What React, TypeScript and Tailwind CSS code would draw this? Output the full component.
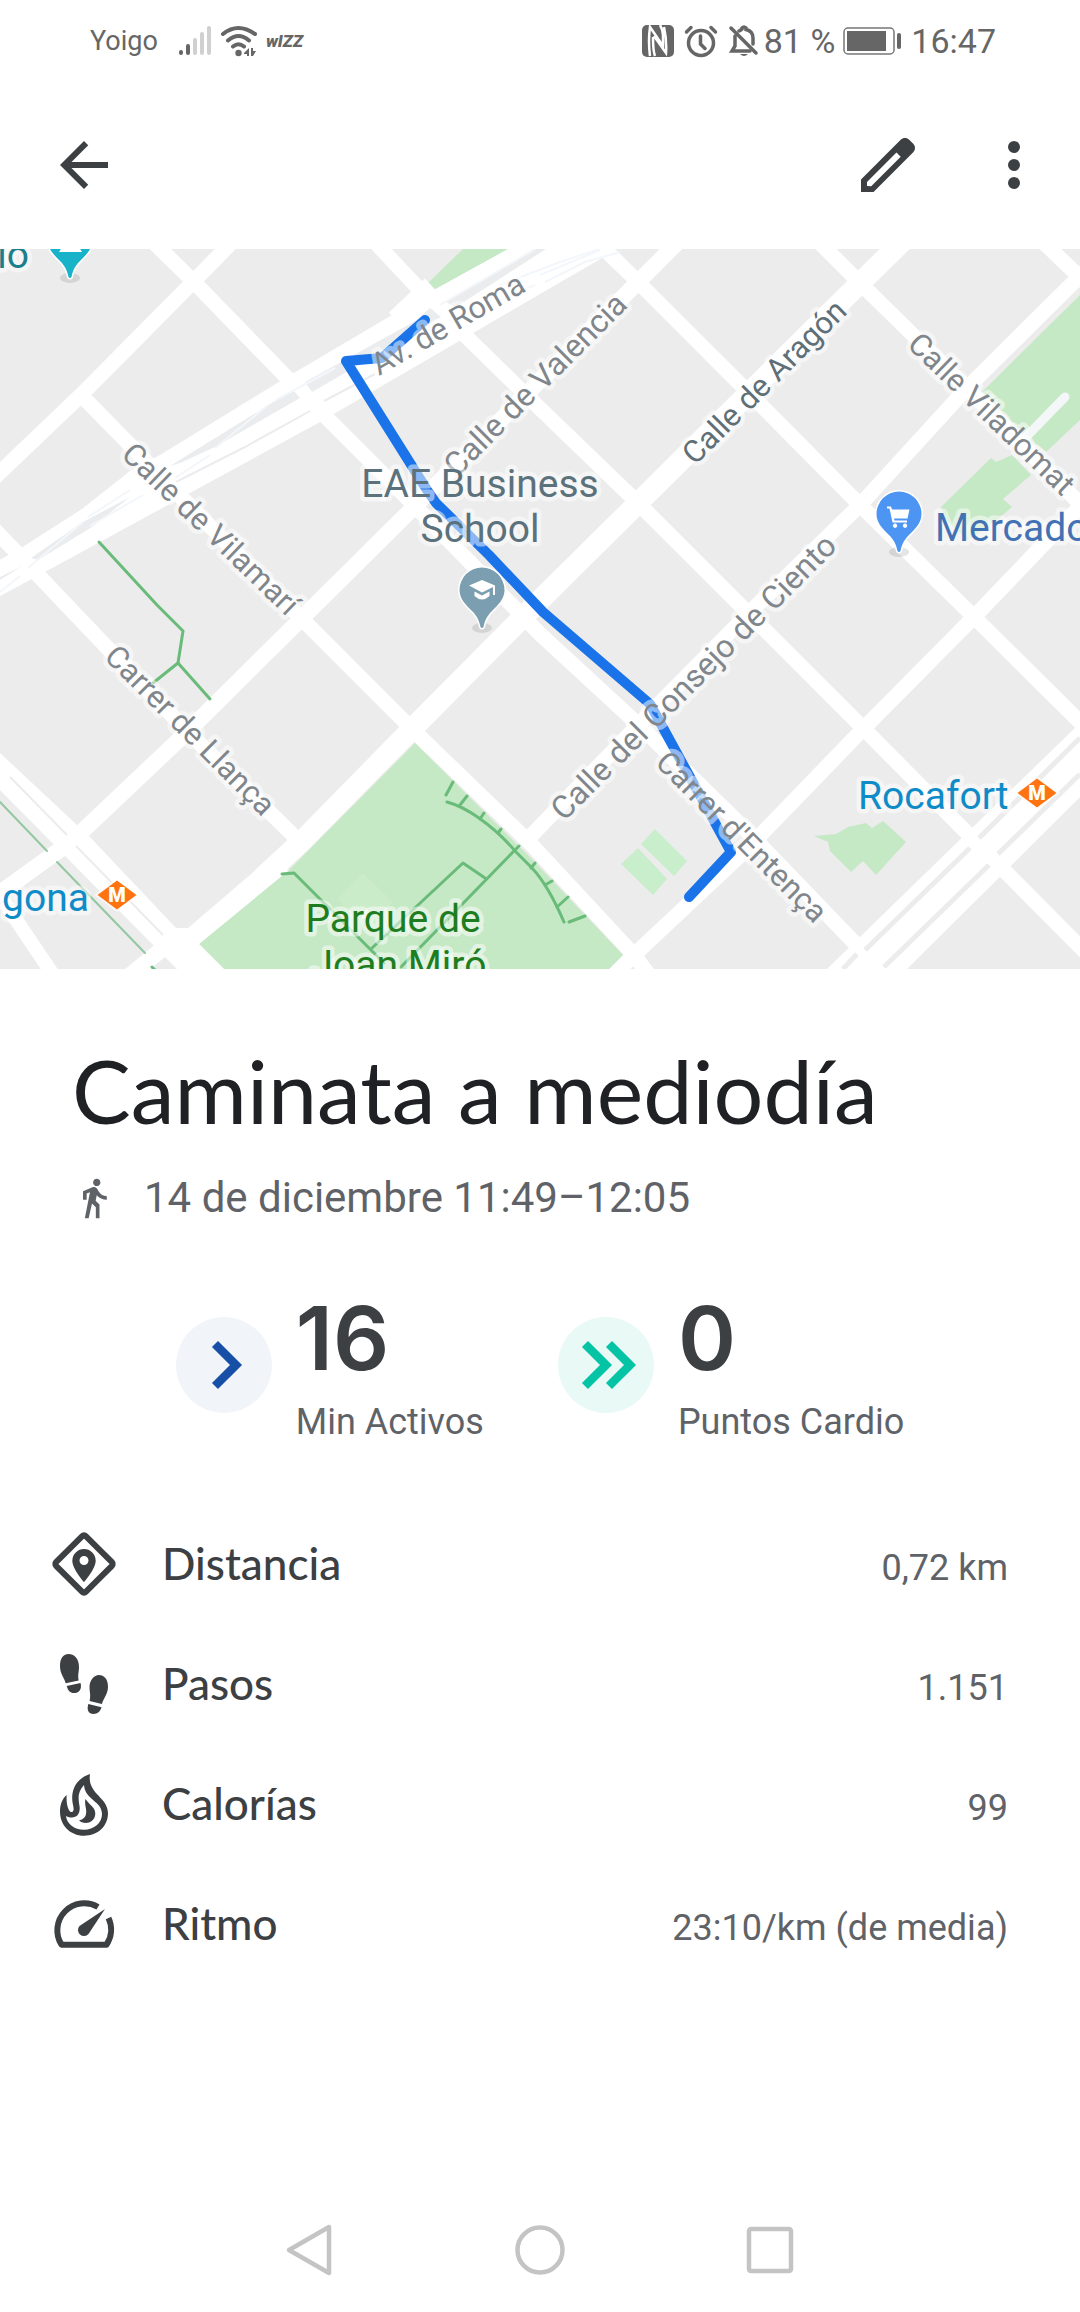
import React from "react";

const BLOCK = "#ececec";
const PARK = "#c5e8c5";
const PATH = "#69bb79";

const roads: { d: string; w: number }[] = [
  { d: "M-10 482L81 395L194 281L235 239", w: 15 },
  { d: "M681 239L638 282L417 504L301 619L186 733L72 841L-10 900", w: 16 },
  { d: "M905 239L860 283L752 390L638 503L523 617L412 729L303 840L262 878", w: 21 },
  { d: "M1094 262L967 388L860 505L747 615L643 720L528 839", w: 15 },
  { d: "M1090 496L973 618L863 729L748 848L634 955L610 979", w: 15 },
  { d: "M150 239L193 281L294 385L413 504L540 634L643 729L747 831L871 960", w: 15 },
  { d: "M81 395L179 495L304 621L412 729L530 843L634 955L652 979", w: 15 },
  { d: "M-10 525L40 577L76 615L186 730L300 842", w: 15 },
  { d: "M372 239L437 308L527 396L638 503L747 612L864 729L974 840L1090 957", w: 15 },
  { d: "M594 239L638 282L750 394L860 505L974 617L1090 732", w: 15 },
  { d: "M816 239L860 283L967 388L1090 514", w: 15 },
  { d: "M1040 239L1090 287", w: 15 },
  { d: "M4 902L56 979", w: 14 },
  { d: "M172 941L128 977", w: 16 },
  { d: "M430 284L394 318", w: 15 },
];

const parkPaths = [
  "M99 542L157 605L183 631L178 663L153 683",
  "M178 663L210 699",
  "M282 874L294 873L384 963",
  "M372 948L463 863L485 878",
  "M401 967L513 852L519 846",
  "M447 802Q462 806 479 818Q500 833 515 851L532 868Q548 885 564 922",
  "M453 782L446 795M467 796L460 805M484 813L480 819M501 829L498 833M535 863L531 868M552 881L545 885M568 897L557 907M585 916L569 922",
];

const streets = [
  { t: "Calle de Vilamarí", x: 120, y: 456, a: 44, size: 31 },
  { t: "Carrer de Llança", x: 103, y: 658, a: 45, size: 31 },
  { t: "Carrer d'Entença", x: 654, y: 764, a: 45, size: 31 },
  { t: "Calle Viladomat", x: 906, y: 346, a: 44, size: 31 },
  { t: "Calle de Valencia", x: 457, y: 478, a: -45, size: 32 },
  { t: "Calle del Consejo de Ciento", x: 564, y: 822, a: -45, size: 32 },
  { t: "Av. de Roma", x: 379, y: 376, a: -30, size: 31 },
];

function Halo(props: React.SVGProps<SVGTextElement>) {
  return (
    <text
      fontFamily="Roboto, sans-serif"
      fontSize={39}
      stroke="#fff"
      strokeOpacity={0.5}
      strokeWidth={9}
      strokeLinejoin="round"
      paintOrder="stroke"
      {...props}
    />
  );
}

function Pin({ x, y, color, children }: { x: number; y: number; color: string; children?: React.ReactNode }) {
  return (
    <g transform={`translate(${x} ${y})`}>
      <ellipse cx={0} cy={38} rx={10} ry={5} fill="#000" opacity={0.1} />
      <path
        d="M0 -22.500A22.500 22.500 0 0 0 -22.500 0C-22.500 9 -16 15 -10 21C-5 26 -3 30 -1.500 37Q0 39 1.500 37C3 30 5 26 10 21C16 15 22.500 9 22.500 0A22.500 22.500 0 0 0 0 -22.500Z"
        fill={color}
        stroke="#fff"
        strokeWidth={3}
        paintOrder="stroke"
      />
      {children}
    </g>
  );
}

function Metro({ x, y }: { x: number; y: number }) {
  return (
    <g transform={`translate(${x} ${y})`}>
      <path d="M0 -14.500L19.500 0L0 14.500L-19.500 0Z" fill="#ff7310" stroke="#fff" strokeOpacity={0.6} strokeWidth={4} paintOrder="stroke" />
      <text x={0} y={7} textAnchor="middle" fontFamily="Roboto, sans-serif" fontWeight={900} fontSize={20} fill="#fff">
        M
      </text>
    </g>
  );
}

function RouteMap() {
  return (
    <svg viewBox="0 249 1080 720" className="block w-full" role="img" aria-label="Mapa del recorrido">
      <rect x={0} y={249} width={1080} height={720} fill={BLOCK} />
      <g fill={PARK}>
        <path d="M463 249H508L436 291L427 284Z" />
        <path d="M1080 295L982 392L1031 440L1046 452L1080 420Z" />
        <path d="M991 458L941 507L946 520L967 540L991 525L1012 507L1003 499L1031 475L1012 455L996 462Z" />
        <path d="M415 743L530 857L623 955L609 969H224L199 944L289 870Z" />
        <path d="M814 836L836 834L848 827L866 823L872 828L883 821L906 842L876 875L863 861L851 872L830 851L828 842Z" />
      </g>
      <path d="M655 829L687 861L674 876L641 844ZM638 848L667 879L653 895L621 864Z" fill="#c9eecb" />
      <path d="M363 873L393 902L365 930L337 898Z" fill="#cbecc9" />
      <path d="M1065 397L1027 436" stroke="#f4f7f8" strokeWidth={9} strokeLinecap="round" />

      <g fill="none" stroke="#fff">
        {roads.map((r) => (
          <path key={r.d} d={r.d} strokeWidth={r.w} strokeLinejoin="round" />
        ))}
      </g>
      <g fill="#fff">
        <path d="M-2 561L21 548L82 509L130 471L160 455L282 380L387 318L430 292L508 249H606L604 257L540 294L461 340L320 422L188 494L45 572L-2 597Z" />
        <path d="M604 257L590 239H625Z" />
        <path d="M0 753L77 825L88 835L176 928L188 928L265 862L289 870L199 944L224 969H177L154 946L0 790Z" />
        <path d="M827 969H907L1080 797V723Z" />
      </g>
      <g fill="#ebecee">
        <path d="M31 558L83 522L130 497L92 527L38 560Z" />
        <path d="M170 466L275 401L293 390L300 398L215 447L180 463Z" />
        <path d="M305 382L417 320L430 308L441 317L350 370L312 392Z" />
        <path d="M446 302L513 263L536 249H546L456 307Z" />
        <path d="M0 577L22 566L0 580Z" />
      </g>
      <path d="M324 401L375 374M176 482L245 447L310 411M10 777L67 835M76 846L163 935" fill="none" stroke="#ececee" strokeWidth={2} />
      <g fill="none" stroke="#f3f6fa" strokeWidth={2}>
        <path d="M28 568L83 522M90 526L143 495M88 517L130 490M175 478L210 455M276 400L335 368M215 448L268 405" />
        <path d="M440 305L520 258L535 249M500 285L560 262L600 249M540 275L600 250M545 282L585 262L620 252M500 300L535 285M0 592L20 576" />
      </g>
      <path d="M843 969L857 954M865 950L970 848M979 838L1080 738M884 967L989 865M998 854L1080 774" stroke={BLOCK} strokeWidth={5} />

      <g fill="none" stroke={PATH} strokeWidth={3} strokeLinecap="round" strokeLinejoin="round">
        {parkPaths.map((d) => (
          <path key={d} d={d} />
        ))}
        <path d="M0 802L47 851M57 862L145 953" stroke="#93c7a0" strokeWidth={2} />
        <path d="M152 967L155 970" />
      </g>

      <path
        d="M425 320L382 358L346 361L427 490L436 503L489 555L543 612L650 704L731 852L689 897"
        fill="none"
        stroke="#1a73e8"
        strokeWidth={10}
        strokeLinecap="round"
        strokeLinejoin="round"
      />

      {streets.map((s) => (
        <Halo key={s.t} fontSize={s.size} fill="#80868b" transform={`translate(${s.x} ${s.y}) rotate(${s.a})`}>
          {s.t}
        </Halo>
      ))}
      <Halo fontSize={31} fill="#5f6f77" transform="translate(695 466) rotate(-45)">
        Calle de Aragón
      </Halo>

      <Pin x={482} y={590} color="#7b9eb0">
        <path d="M0 -10L13 -4.500V5H11V-3L0 2.500L-13 -4.500ZM-7.500 1.500L0 5.500L7.500 1.500V6Q0 13 -7.500 6Z" fill="#fff" />
      </Pin>
      <Pin x={899} y={514} color="#4c95f3">
        <path
          transform="translate(-13.500 -12)"
          fill="#fff"
          d="M1.500 4.500H5.500L6.500 7.500H24L22 16.500H8.500L9 18.500H21.500V20.500H7L4 6.500H1.500ZM9.500 21.500A2.200 2.200 0 1 0 9.600 21.500ZM19.500 21.500A2.200 2.200 0 1 0 19.600 21.500Z"
        />
      </Pin>
      <Pin x={70} y={240} color="#18b3c8">
        <path d="M-11 12L-8 7H9L12 12Z" fill="#fff" />
      </Pin>

      <g fill="#5b727d">
        <Halo x={480} y={497} textAnchor="middle">
          EAE Business
        </Halo>
        <Halo x={480} y={542} textAnchor="middle">
          School
        </Halo>
      </g>
      <Halo x={935} y={541} fill="#4272b4">
        Mercado
      </Halo>
      <Halo x={29} y={268} textAnchor="end" fill="#1d7f8c">
        io
      </Halo>
      <g fill="#0f8cc8">
        <Halo x={858} y={809}>
          Rocafort
        </Halo>
        <Halo x={2} y={911}>
          gona
        </Halo>
      </g>
      <g fill="#1e7d1e">
        <Halo x={393} y={932} textAnchor="middle">
          Parque de
        </Halo>
        <Halo x={399} y={978} textAnchor="middle">
          Joan Miró
        </Halo>
      </g>
      <Metro x={117} y={895} />
      <Metro x={1037} y={793} />
    </svg>
  );
}

function StatusBar() {
  return (
    <div className="flex h-20 items-center justify-between pt-0.5 pr-[84px] pl-[90px] text-[#666]">
      <div className="flex items-center">
        <span className="text-[27px] leading-8">Yoigo</span>
        <svg viewBox="0 0 34 32" className="ml-5 h-8 w-[34px]">
          <g strokeWidth={4} strokeLinecap="round">
            <path d="M3 28V27M10 28V21" stroke="#666" />
            <path d="M17 28V15M24 28V9M31 28V3" stroke="#d0d0d0" />
          </g>
        </svg>
        <svg viewBox="0 0 38 32" className="ml-2 h-8 w-[38px]">
          <g fill="none" stroke="#666" strokeWidth={4} strokeLinecap="round">
            <path d="M3 9Q18 -3 35 9M8 15.500Q18.500 6.500 29 15.500M13 21.500Q18.500 17 24 21.500" />
          </g>
          <circle cx={18.500} cy={28} r={3.200} fill="#666" />
          <path d="M24 28L29 23V31H27V29H24ZM31 23H33V26H36L33 31H31Z" fill="#666" />
        </svg>
        <span className="ml-2 text-[17px] leading-8 font-black italic">wIZZ</span>
      </div>
      <div className="flex items-center">
        <svg viewBox="0 0 32 32" className="h-8 w-8">
          <rect x={0} y={0} width={32} height={32} rx={5} fill="#666" />
          <path
            d="M8 31Q6 16 8 2L21 21V10Q21 5 18 0M11 12Q11 26 13 31M12 11L24 28Q25 16 22 2"
            fill="none"
            stroke="#fff"
            strokeWidth={2.500}
          />
        </svg>
        <svg viewBox="0 0 34 34" className="ml-2.5 h-[34px] w-[34px]" fill="none" stroke="#666" strokeLinecap="round">
          <circle cx={17} cy={19} r={12.500} strokeWidth={3.500} />
          <path d="M16.500 12V20L21 24.500" strokeWidth={3.500} />
          <path d="M2.500 8L7 3.500M31.500 8L27 3.500" strokeWidth={3.500} />
        </svg>
        <svg viewBox="0 0 32 34" className="ml-2.5 h-[34px] w-8" fill="none" stroke="#666" strokeLinecap="round">
          <path d="M3 4L28 29" strokeWidth={3.500} />
          <path d="M7 12V22L4 27H22M11 7Q13 6 14 5V4Q16 2 18 4V5.500Q25 7 25 14V20" strokeWidth={3.500} />
          <path d="M12 30H20Q16 34 12 30Z" fill="#666" stroke="none" />
        </svg>
        <span className="ml-1 text-[34px] leading-10">81 %</span>
        <svg viewBox="0 0 60 30" className="ml-2 h-[30px] w-[60px]">
          <rect x={1} y={2} width={50} height={26} rx={4} fill="none" stroke="#777" strokeWidth={1.500} />
          <rect x={4} y={5} width={39} height={20} fill="#666" />
          <rect x={54} y={7} width={4} height={16} rx={2} fill="#666" />
        </svg>
        <span className="ml-2 text-[34px] leading-10">16:47</span>
      </div>
    </div>
  );
}

const stats = [
  { value: "16", label: "Min Activos", bg: "bg-[#f1f5fa]", color: "#174ea6", d: "M39 27L60 48L39 69" },
  { value: "0", label: "Puntos Cardio", bg: "bg-[#e8f9f6]", color: "#04c4a5", d: "M27 27L48 48L27 69M51 27L72 48L51 69" },
];

function DistanceIcon() {
  return (
    <svg viewBox="0 0 72 72" className="size-[72px]">
      <rect x={15} y={15} width={42} height={42} rx={2.500} transform="rotate(45 36 36)" fill="none" stroke="#3c4043" strokeWidth={6} />
      <path
        d="M36 21A11.700 11.700 0 0 0 24.300 32.700C24.300 41 36 54 36 54S47.700 41 47.700 32.700A11.700 11.700 0 0 0 36 21ZM36 28A4.500 4.500 0 1 1 36 37A4.500 4.500 0 1 1 36 28Z"
        fill="#3c4043"
      />
    </svg>
  );
}

function StepsIcon() {
  return (
    <svg viewBox="0 0 72 72" className="size-[72px]" fill="#3c4043">
      <path d="M20.500 6C26 6 31 10 31 19C31 24 29.500 27 30.700 32.500L17.700 35.300C16 29 12 26 12 18C12 10 15.500 6 20.500 6Z" />
      <path d="M18.700 38L32.500 35C34 40 32 44.500 27 45C22.500 45.500 20 43 18.700 38Z" />
      <path d="M51 27C56 27 60 31 60 38.700C60 46 56 49 53.900 56L41.600 53C43 47 41.500 44 41.500 39C41.500 32 46 27 51 27Z" />
      <path d="M40.300 56L53.500 59.300C52 64 49.500 66 45.500 66C40.500 66 38.500 62 40.300 56Z" />
    </svg>
  );
}

function FlameIcon() {
  return (
    <svg viewBox="0 0 72 72" className="size-[72px]">
      <path
        d="M42 6C27 11 22 24 25 37C26 41 26 44 23 44C20 43 18 35 18.700 27C14 31 12 37 12 43.700C12 57 22 67.700 36 67.700C50 67.700 60 58 60 45C60 29 39 26 42 6ZM36 17C37 32 54 33 54 46C54 55 46 61.700 36 61.700C26 61.700 19 56 18 48C26 52 33 48 31.500 38C30 29 30 24 36 17Z"
        fill="#3c4043"
        fillRule="evenodd"
      />
      <path d="M37.500 31C42 38 47.500 39 47.300 46C47 52 42 55 38 55C35 55 32.500 54 31 52.500C37 51 39 47 38 41C37.500 38 36.500 34 37.500 31Z" fill="#3c4043" />
    </svg>
  );
}

function PaceIcon() {
  return (
    <svg viewBox="0 0 72 72" className="size-[72px]">
      <path d="M50 19A27 27 0 0 0 13.500 56.700H58.500A27 27 0 0 0 60.500 30" fill="none" stroke="#3c4043" strokeWidth={6} strokeLinejoin="round" />
      <path d="M57 21L40.500 46A6 6 0 1 1 31.500 38Z" fill="#3c4043" />
    </svg>
  );
}

const details = [
  { label: "Distancia", value: "0,72 km", Icon: DistanceIcon },
  { label: "Pasos", value: "1.151", Icon: StepsIcon },
  { label: "Calorías", value: "99", Icon: FlameIcon },
  { label: "Ritmo", value: "23:10/km (de media)", Icon: PaceIcon },
];

export default function App() {
  return (
    <div className="flex min-h-screen flex-col bg-white font-[Roboto,sans-serif]">
      <StatusBar />
      <header className="flex h-[169px] items-center pr-[30px] pl-12 text-[#3c4043]">
        <button type="button" aria-label="Atrás">
          <svg viewBox="0 0 24 24" className="size-[72px]" fill="currentColor">
            <path d="M20 11H7.830l5.590-5.590L12 4l-8 8 8 8 1.410-1.410L7.830 13H20v-2z" />
          </svg>
        </button>
        <button type="button" aria-label="Editar" className="ml-auto">
          <svg viewBox="0 0 24 24" className="size-[72px]" fill="currentColor">
            <path d="M20.410 4.940l-1.350-1.350c-.78-.78-2.050-.78-2.830 0L3 16.820V21h4.180L20.410 7.770c.79-.78.79-2.050 0-2.830zM6.410 19.060L5 19v-1.360l9.820-9.820 1.410 1.410-9.820 9.830z" />
          </svg>
        </button>
        <button type="button" aria-label="Más opciones" className="ml-[54px]">
          <svg viewBox="0 0 24 24" className="size-[72px]" fill="currentColor">
            <circle cx={12} cy={6} r={2} />
            <circle cx={12} cy={12} r={2} />
            <circle cx={12} cy={18} r={2} />
          </svg>
        </button>
      </header>

      <RouteMap />

      <main>
        <section className="px-[72px] pt-[73px]">
          <h1 className="font-[Lato,sans-serif] text-[88px] leading-[96px] text-[#202124]">Caminata a mediodía</h1>
          <div className="mt-9 flex items-center text-[#5f6368]">
            <svg viewBox="0 0 24 24" className="size-[44px]" fill="currentColor">
              <path d="M13.500 5.500c1.100 0 2-.9 2-2s-.9-2-2-2-2 .9-2 2 .9 2 2 2zM9.800 8.900L7 23h2.100l1.800-8 2.100 2v6h2v-7.500l-2.100-2 .6-3C14.800 12 16.800 13 19 13v-2c-1.900 0-3.500-1-4.300-2.400l-1-1.600c-.4-.6-1-1-1.700-1-.3 0-.5.100-.8.100L6 8.300V13h2V9.600l1.800-.7" />
            </svg>
            <p className="ml-7 text-[42px] leading-[48px]">14 de diciembre 11:49–12:05</p>
          </div>
        </section>

        <section className="mt-[70px] flex justify-center gap-[74px]">
          {stats.map((s) => (
            <div key={s.label} className="flex items-start gap-6">
              <div className={`mt-[25px] size-24 rounded-full ${s.bg}`}>
                <svg viewBox="0 0 96 96" fill="none" stroke={s.color} strokeWidth={8.500}>
                  <path d={s.d} />
                </svg>
              </div>
              <div>
                <p className="font-[Inter,sans-serif] text-[88px] leading-[92px] font-semibold text-[#3c4043]">{s.value}</p>
                <p className="mt-4 text-[36px] leading-[44px] text-[#5f6368]">{s.label}</p>
              </div>
            </div>
          ))}
        </section>

        <dl className="mt-[60px] pr-[72px] pl-12">
          {details.map(({ label, value, Icon }) => (
            <div key={label} className="flex h-[120px] items-center">
              <Icon />
              <div className="ml-[42px] flex flex-1 items-baseline justify-between">
                <dt className="font-[Lato,sans-serif] text-[44px] leading-[48px] font-medium text-[#3c4043]">{label}</dt>
                <dd className="text-[36px] leading-[44px] text-[#5f6368]">{value}</dd>
              </div>
            </div>
          ))}
        </dl>
      </main>

      <nav className="mt-auto flex h-[124px] items-center justify-center gap-[174px]" aria-label="Sistema">
        <button type="button" aria-label="Volver">
          <svg viewBox="0 0 56 56" className="size-14" fill="none" stroke="#c4c4c4" strokeWidth={4.500} strokeLinejoin="round">
            <path d="M47 5V51L7 28Z" />
          </svg>
        </button>
        <button type="button" aria-label="Inicio">
          <svg viewBox="0 0 56 56" className="size-14" fill="none" stroke="#c4c4c4" strokeWidth={4.500}>
            <circle cx={28} cy={28} r={22.500} />
          </svg>
        </button>
        <button type="button" aria-label="Recientes">
          <svg viewBox="0 0 56 56" className="size-14" fill="none" stroke="#c4c4c4" strokeWidth={4.500}>
            <rect x={7} y={7} width={42} height={42} rx={2} />
          </svg>
        </button>
      </nav>
    </div>
  );
}
